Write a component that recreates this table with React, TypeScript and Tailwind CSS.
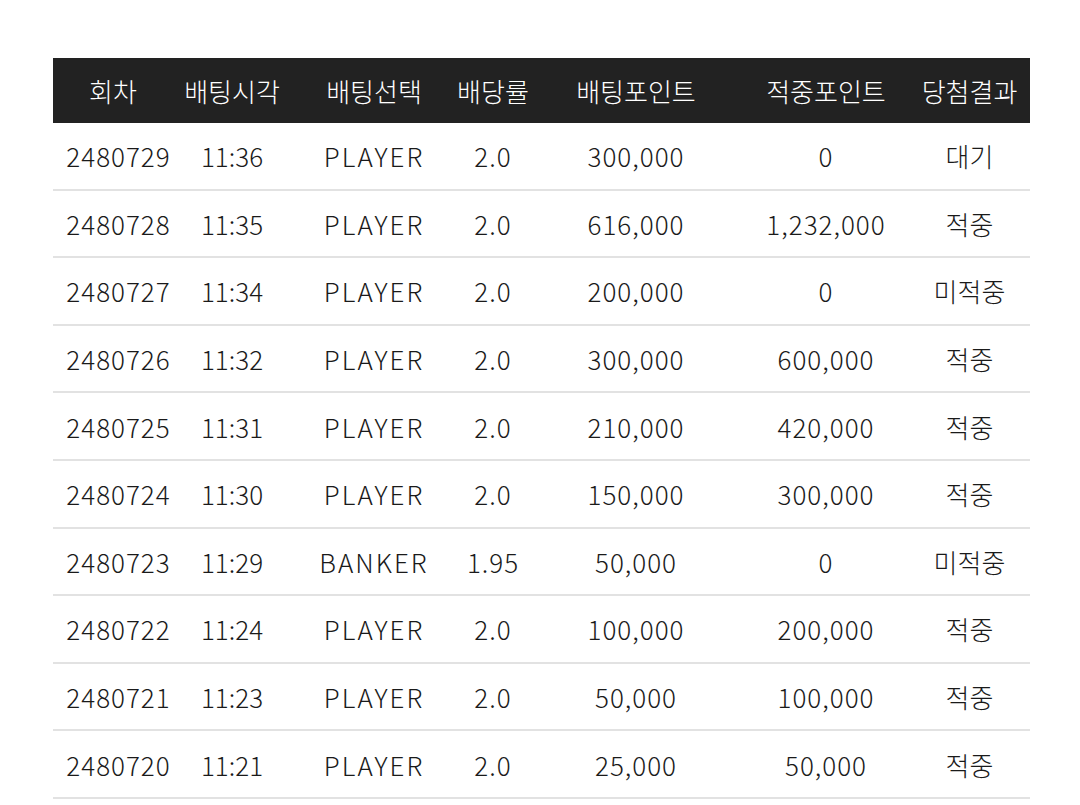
import React from "react";

const widths = ["w-[120px]", "w-[118px]", "w-[166px]", "w-[72px]", "w-[214px]", "w-[166px]", "w-[121px]"];
const headers = ["회차", "배팅시각", "배팅선택", "배당률", "배팅포인트", "적중포인트", "당첨결과"];
const rows = [
  ["2480729", "11:36", "PLAYER", "2.0", "300,000", "0", "대기"],
  ["2480728", "11:35", "PLAYER", "2.0", "616,000", "1,232,000", "적중"],
  ["2480727", "11:34", "PLAYER", "2.0", "200,000", "0", "미적중"],
  ["2480726", "11:32", "PLAYER", "2.0", "300,000", "600,000", "적중"],
  ["2480725", "11:31", "PLAYER", "2.0", "210,000", "420,000", "적중"],
  ["2480724", "11:30", "PLAYER", "2.0", "150,000", "300,000", "적중"],
  ["2480723", "11:29", "BANKER", "1.95", "50,000", "0", "미적중"],
  ["2480722", "11:24", "PLAYER", "2.0", "100,000", "200,000", "적중"],
  ["2480721", "11:23", "PLAYER", "2.0", "50,000", "100,000", "적중"],
  ["2480720", "11:21", "PLAYER", "2.0", "25,000", "50,000", "적중"],
];

function cellTrack(ci: number) {
  if (ci === 0) return "tracking-[1px] pl-[11px]";
  if (ci === 2) return "tracking-[2px]";
  if (ci === 6) return "";
  if (ci === 1) return "tracking-[0px]";
  return "tracking-[1px]";
}

export default function App() {
  return (
    <div
      className="w-[1080px] h-[805px] bg-white overflow-hidden pt-[58px] pl-[53px]"
      style={{ fontFamily: '"Noto Sans CJK KR", "Noto Sans", sans-serif' }}
    >
      <div className="w-[977px]">
        <div className="flex h-[65px] bg-[#222222] text-white items-center text-[26px] font-light">
          {headers.map((h, i) => (
            <div key={i} className={`${widths[i]} text-center whitespace-nowrap`}>
              {h}
            </div>
          ))}
        </div>
        {rows.map((r, ri) => (
          <div
            key={ri}
            className="flex h-[67.6px] items-center border-b-2 border-[#e2e2e2] text-[#1a1a1a] text-[26px] font-light"
          >
            {r.map((c, ci) => (
              <div key={ci} className={`${widths[ci]} text-center whitespace-nowrap ${cellTrack(ci)}`}>
                {c}
              </div>
            ))}
          </div>
        ))}
      </div>
    </div>
  );
}
